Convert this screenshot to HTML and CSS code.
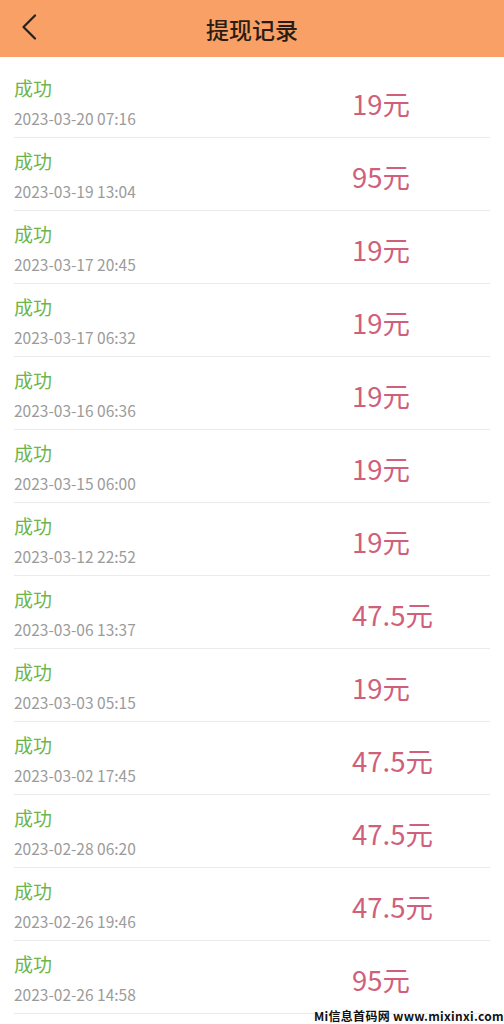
FILE: index.html
```html
<!DOCTYPE html>
<html lang="zh-CN">
<head>
  <meta charset="UTF-8">
  <meta name="viewport" content="width=device-width, initial-scale=1.0">
  <title>提现记录</title>
  <link rel="stylesheet" href="styles.css">
</head>
<body>
  <header class="topbar">
    <a class="back" href="#">
      <svg width="16" height="26" viewBox="0 0 16 26"><path d="M14 1.5 L2.5 13 L14 24.5" fill="none" stroke="#222" stroke-width="2.2" stroke-linecap="round" stroke-linejoin="round"/></svg>
    </a>
    <h1>提现记录</h1>
  </header>

  <ul class="records">
    <li class="record"><div class="info"><span class="status">成功</span><span class="date">2023-03-20 07:16</span></div><span class="amount">19元</span></li>
    <li class="record"><div class="info"><span class="status">成功</span><span class="date">2023-03-19 13:04</span></div><span class="amount">95元</span></li>
    <li class="record"><div class="info"><span class="status">成功</span><span class="date">2023-03-17 20:45</span></div><span class="amount">19元</span></li>
    <li class="record"><div class="info"><span class="status">成功</span><span class="date">2023-03-17 06:32</span></div><span class="amount">19元</span></li>
    <li class="record"><div class="info"><span class="status">成功</span><span class="date">2023-03-16 06:36</span></div><span class="amount">19元</span></li>
    <li class="record"><div class="info"><span class="status">成功</span><span class="date">2023-03-15 06:00</span></div><span class="amount">19元</span></li>
    <li class="record"><div class="info"><span class="status">成功</span><span class="date">2023-03-12 22:52</span></div><span class="amount">19元</span></li>
    <li class="record"><div class="info"><span class="status">成功</span><span class="date">2023-03-06 13:37</span></div><span class="amount">47.5元</span></li>
    <li class="record"><div class="info"><span class="status">成功</span><span class="date">2023-03-03 05:15</span></div><span class="amount">19元</span></li>
    <li class="record"><div class="info"><span class="status">成功</span><span class="date">2023-03-02 17:45</span></div><span class="amount">47.5元</span></li>
    <li class="record"><div class="info"><span class="status">成功</span><span class="date">2023-02-28 06:20</span></div><span class="amount">47.5元</span></li>
    <li class="record"><div class="info"><span class="status">成功</span><span class="date">2023-02-26 19:46</span></div><span class="amount">47.5元</span></li>
    <li class="record"><div class="info"><span class="status">成功</span><span class="date">2023-02-26 14:58</span></div><span class="amount">95元</span></li>
  </ul>

  <div class="watermark">Mi信息首码网 www.mixinxi.com</div>
</body>
</html>
```

FILE: styles.css
```css
body {
  margin: 0;
  font-family: "Noto Sans CJK SC", "Noto Sans", sans-serif;
  background: #fff;
  height: 1024px;
  overflow: hidden;
  position: relative;
}
.topbar {
  height: 57px;
  background-color: #f8a065;
  display: flex;
  align-items: center;
  justify-content: center;
  position: relative;
}
.topbar h1 {
  margin: 0;
  font-size: 23px;
  font-weight: 500;
  color: #2b1d14;
}
.back {
  position: absolute;
  left: 21px;
  top: 14px;
  display: block;
}
.records {
  list-style: none;
  margin: 0;
  padding: 8px 14px 0;
}
.record {
  display: grid;
  grid-template-columns: 1fr 138px;
  align-items: center;
  padding: 11px 0 8px;
  border-bottom: 1px solid #ebebeb;
}
.info {
  display: flex;
  flex-direction: column;
}
.status {
  font-size: 19px;
  line-height: 24px;
  color: #6cb64d;
}
.date {
  margin-top: 7px;
  font-size: 15.5px;
  line-height: 22px;
  color: #9b9b9b;
}
.amount {
  font-size: 27.5px;
  line-height: 36px;
  color: #d05f7b;
}
.watermark {
  position: absolute;
  right: 0;
  bottom: 0;
  font-size: 12px;
  font-weight: bold;
  color: #111;
  letter-spacing: 0.3px;
  text-shadow: 0 0 2px #fff, 0 0 2px #fff;
}
```
